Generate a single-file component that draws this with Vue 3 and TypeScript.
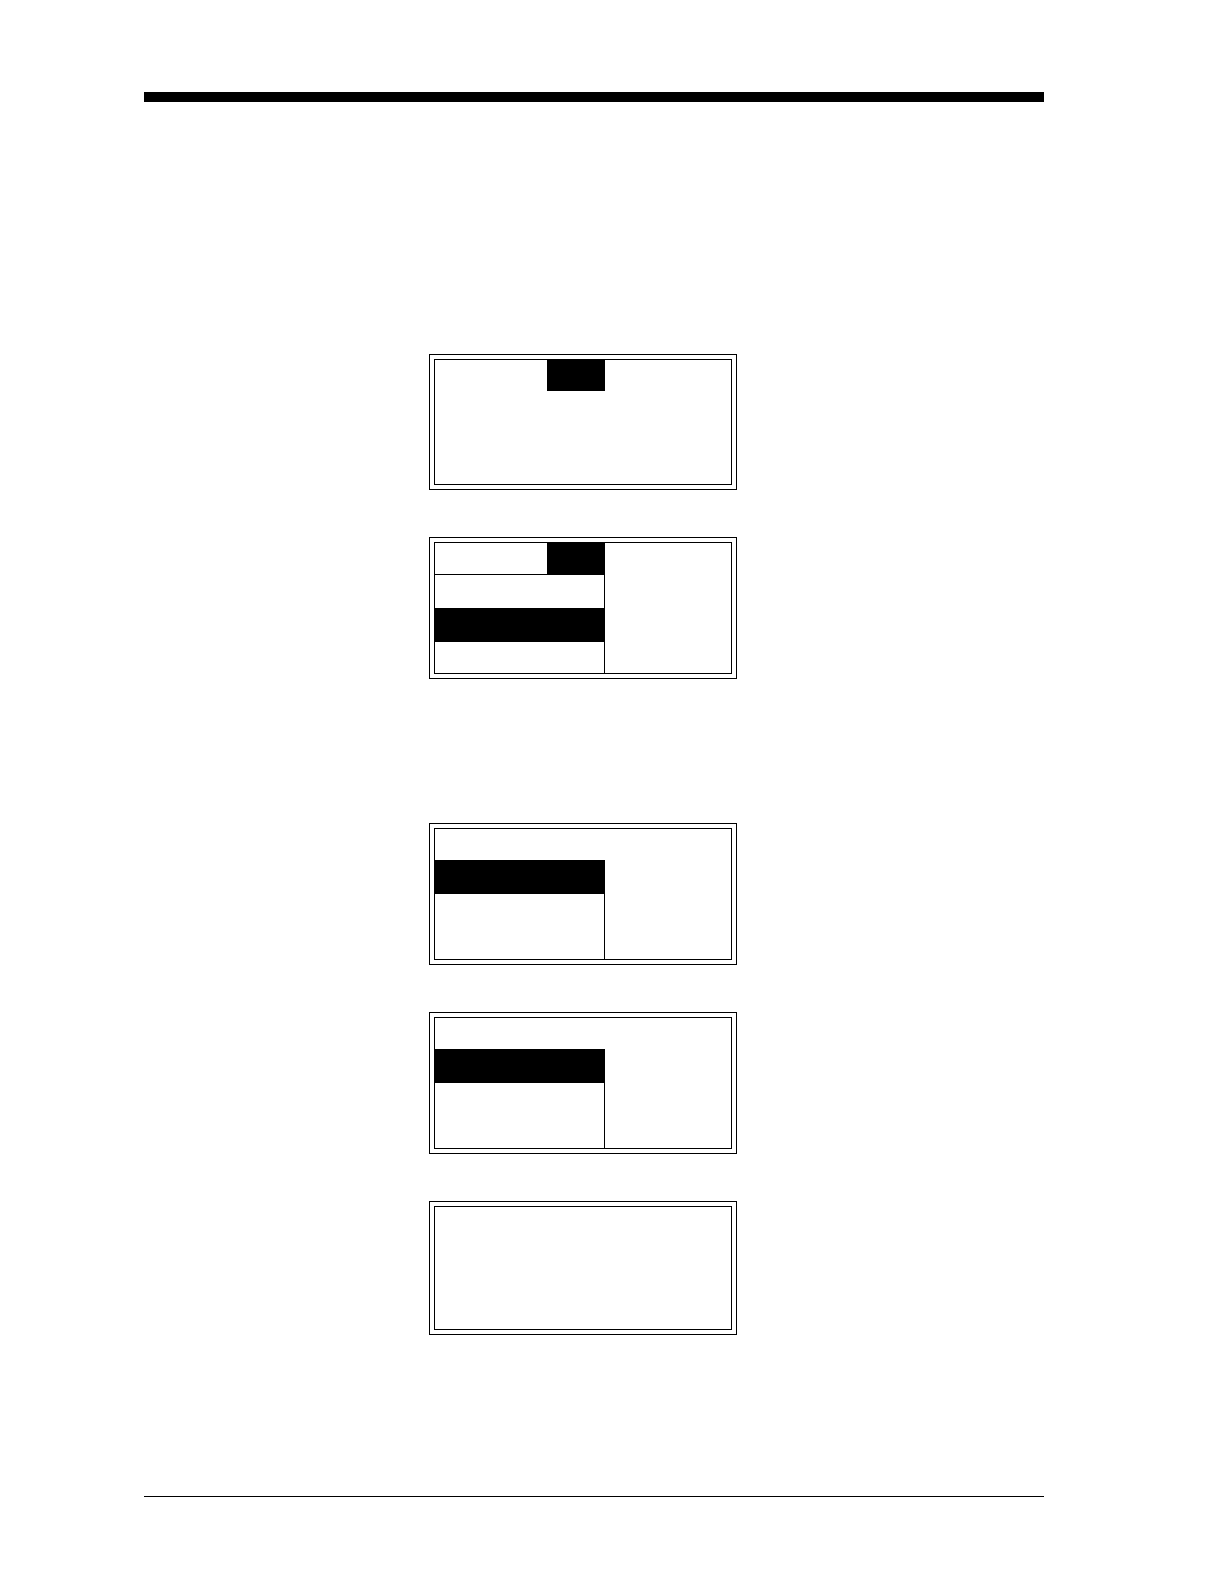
<script setup lang="ts">
type RowKind = 'head' | 'tab' | 'line' | 'item' | 'selected' | 'rest'

interface Screen {
  id: number
  size: 'short' | 'medium' | 'tall'
  rows: RowKind[]
}

const groups: Screen[][] = [
  [
    { id: 1, size: 'medium', rows: ['tab'] },
    { id: 2, size: 'tall', rows: ['line', 'item', 'selected', 'rest'] },
  ],
  [
    { id: 3, size: 'tall', rows: ['head', 'selected', 'rest'] },
    { id: 4, size: 'tall', rows: ['head', 'selected', 'rest'] },
    { id: 5, size: 'short', rows: [] },
  ],
]
</script>

<template>
  <div class="page">
    <header class="rule-top"></header>
    <main class="content">
      <section v-for="(group, index) in groups" :key="index" class="group">
        <div v-for="screen in group" :key="screen.id" class="screen">
          <div class="display" :class="screen.size">
            <div v-for="row in screen.rows" :key="row" class="row" :class="row"></div>
          </div>
        </div>
      </section>
    </main>
    <footer class="rule-bottom"></footer>
  </div>
</template>

<style>
body {
  margin: 0;
  background: #fff;
}
</style>

<style scoped>
.page {
  box-sizing: border-box;
  padding: 92px 180px 87px 144px;
  font-family: "Liberation Sans", Arial, sans-serif;
}

.rule-top {
  height: 10px;
  background: #000;
}

.content {
  display: flex;
  flex-direction: column;
  gap: 144px;
  padding: 252px 0 161px 285px;
}

.group {
  display: flex;
  flex-direction: column;
  align-items: flex-start;
  gap: 47px;
}

.screen {
  box-sizing: border-box;
  width: 308px;
  padding: 4px;
  border: 1px solid #000;
}

.display {
  display: flex;
  flex-direction: column;
  border: 1px solid #000;
}

.short {
  min-height: 122px;
}

.medium {
  min-height: 124px;
}

.tall {
  min-height: 130px;
}

.row {
  box-sizing: border-box;
  width: 170px;
}

.head {
  height: 31px;
}

/* Highlighted title tab at the right end of the menu column */
.tab,
.line {
  height: 31px;
  background: linear-gradient(#000, #000) right / 58px 100% no-repeat;
}

.line {
  height: 32px;
  border-bottom: 1px solid #000;
}

.item {
  height: 33px;
  border-right: 1px solid #000;
}

.selected {
  height: 34px;
  background: #000;
}

.rest {
  flex: 1;
  border-right: 1px solid #000;
}

.rule-bottom {
  height: 1px;
  background: #000;
}
</style>
